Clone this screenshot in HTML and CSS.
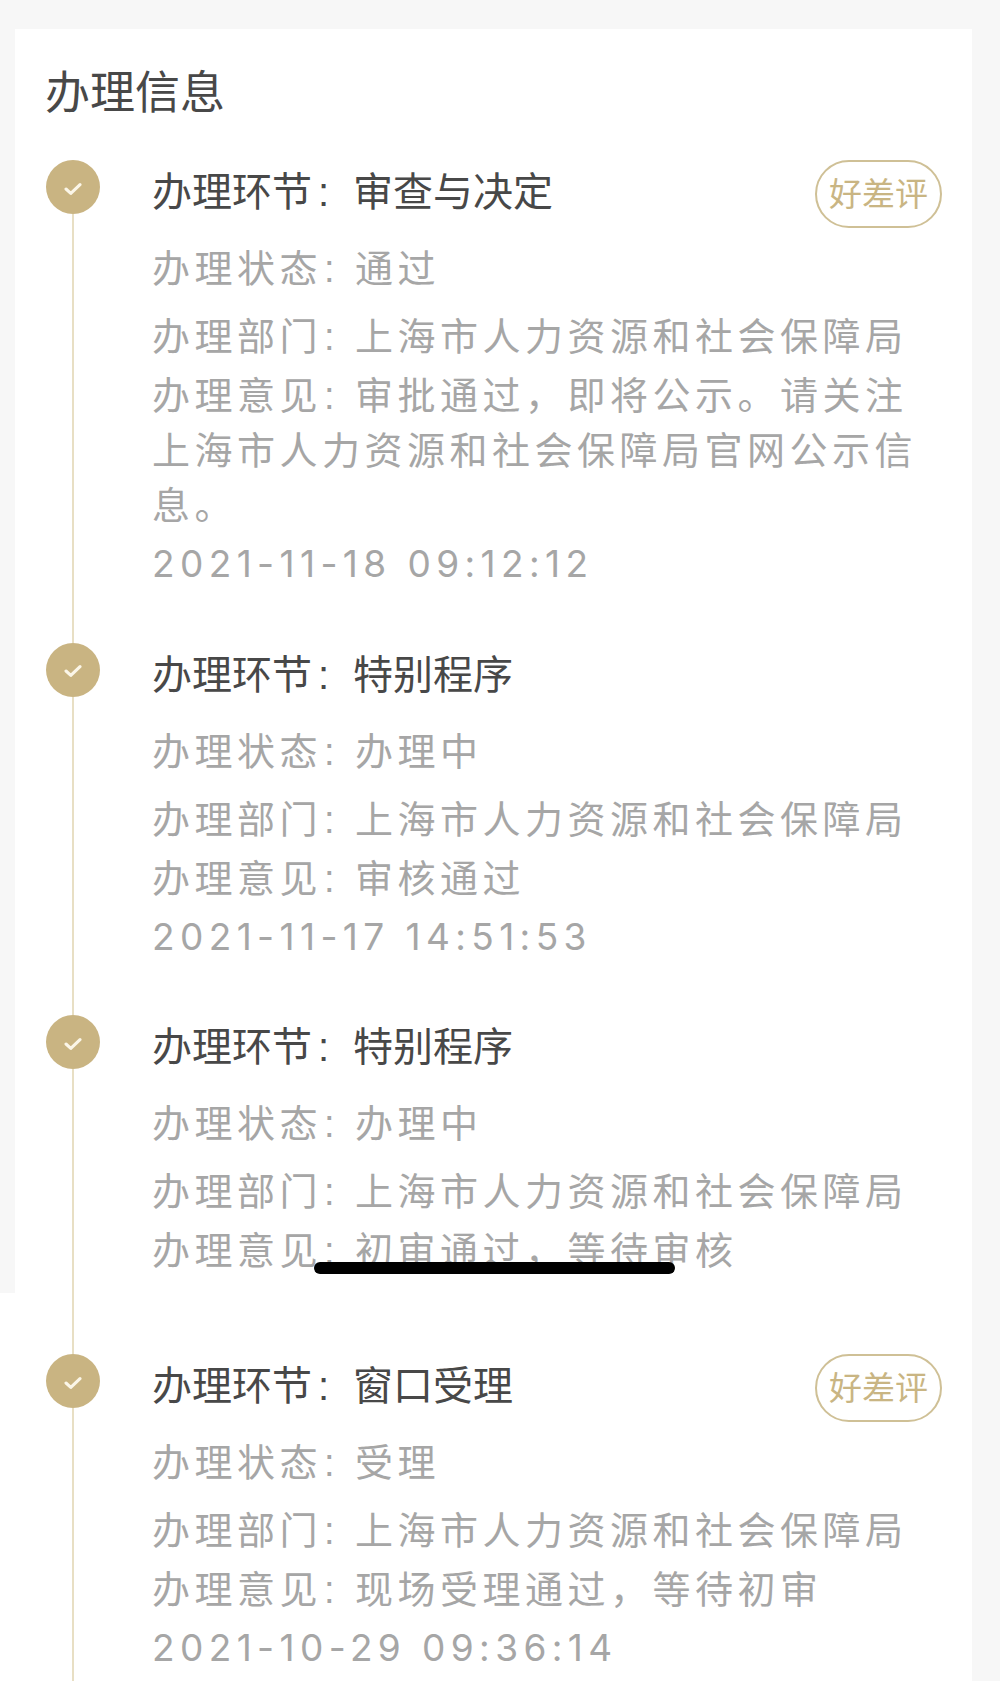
FILE: index.html
```html
<!DOCTYPE html>
<html lang="zh-CN">
  <head>
    <meta charset="utf-8"/>
    <title>办理信息</title>
    <link rel="stylesheet" href="styles.css">
  </head>
  <body>
    <div class="top">
      <div class="card">
        <h1>办理信息</h1>

        <div class="item">
          <div class="marker">
            <span class="dot"><svg viewBox="0 0 20 16" width="18" height="14"><path d="M2 8l5.5 5L18 3"/></svg></span>
            <span class="line"></span>
          </div>
          <div class="info">
            <div class="head">
              <span class="step">办理环节<i class="colon">:</i>审查与决定</span>
              <a class="rate">好差评</a>
            </div>
            <p class="state">办理状态<i class="colon">:</i>通过</p>
            <p class="dept">办理部门<i class="colon">:</i>上海市人力资源和社会保障局</p>
            <p class="note">办理意见<i class="colon">:</i>审批通过&#65292;即将公示。请关注上海市人力资源和社会保障局官网公示信息。</p>
            <p class="time">2021-11-18 09:12:12</p>
          </div>
        </div>

        <div class="item">
          <div class="marker">
            <span class="dot"><svg viewBox="0 0 20 16" width="18" height="14"><path d="M2 8l5.5 5L18 3"/></svg></span>
            <span class="line"></span>
          </div>
          <div class="info">
            <div class="head">
              <span class="step">办理环节<i class="colon">:</i>特别程序</span>
            </div>
            <p class="state">办理状态<i class="colon">:</i>办理中</p>
            <p class="dept">办理部门<i class="colon">:</i>上海市人力资源和社会保障局</p>
            <p class="note">办理意见<i class="colon">:</i>审核通过</p>
            <p class="time">2021-11-17 14:51:53</p>
          </div>
        </div>

        <div class="item item-cut">
          <div class="marker">
            <span class="dot"><svg viewBox="0 0 20 16" width="18" height="14"><path d="M2 8l5.5 5L18 3"/></svg></span>
            <span class="line"></span>
          </div>
          <div class="info">
            <div class="head">
              <span class="step">办理环节<i class="colon">:</i>特别程序</span>
            </div>
            <p class="state">办理状态<i class="colon">:</i>办理中</p>
            <p class="dept">办理部门<i class="colon">:</i>上海市人力资源和社会保障局</p>
            <p class="note">办理意见<i class="colon">:</i>初审通过&#65292;等待审核</p>
          </div>
        </div>
      </div>
      <div class="home-bar"></div>
    </div>

    <div class="bottom">
      <div class="card">
        <div class="lead"></div>
        <div class="item">
          <div class="marker">
            <span class="dot"><svg viewBox="0 0 20 16" width="18" height="14"><path d="M2 8l5.5 5L18 3"/></svg></span>
            <span class="line"></span>
          </div>
          <div class="info">
            <div class="head">
              <span class="step">办理环节<i class="colon">:</i>窗口受理</span>
              <a class="rate">好差评</a>
            </div>
            <p class="state">办理状态<i class="colon">:</i>受理</p>
            <p class="dept">办理部门<i class="colon">:</i>上海市人力资源和社会保障局</p>
            <p class="note">办理意见<i class="colon">:</i>现场受理通过&#65292;等待初审</p>
            <p class="time">2021-10-29 09:36:14</p>
          </div>
        </div>
      </div>
    </div>
  </body>
</html>
```

FILE: styles.css
```css
html, body {
  margin: 0;
  padding: 0;
}
body {
  background: #ffffff;
  font-family: "Noto Sans CJK SC", "Liberation Sans", sans-serif;
  height: 1681px;
  overflow: hidden;
}
p {
  margin: 0;
}
.top {
  position: relative;
  background: #f7f7f7;
  padding: 29px 28px 0 15px;
}
.bottom {
  background: #f7f7f7;
  padding-right: 28px;
}
.bottom .card {
  padding-left: 46px;
}
.card {
  background: #ffffff;
  padding: 0 30px 0 31px;
}
h1 {
  margin: 0 0 0 -1px;
  padding: 31px 0 40px;
  font-size: 45px;
  line-height: 60px;
  font-weight: 400;
  color: #484848;
}
.item {
  display: flex;
}
.marker {
  display: flex;
  flex-direction: column;
  align-items: center;
  flex: none;
  width: 54px;
  margin-right: 52px;
}
.dot {
  display: flex;
  align-items: center;
  justify-content: center;
  flex: none;
  width: 54px;
  height: 54px;
  border-radius: 50%;
  background: #c9b482;
}
.dot svg {
  margin-top: 3px;
  fill: none;
  stroke: #fbf6e8;
  stroke-width: 3.5;
  stroke-linecap: round;
  stroke-linejoin: round;
}
.line {
  flex: 1;
  width: 2px;
  background: #e8dfc4;
}
.lead {
  width: 2px;
  height: 61px;
  margin-left: 26px;
  background: #e8dfc4;
}
.info {
  flex: 1;
  min-width: 0;
  padding-bottom: 51.5px;
  color: #a6a6a6;
  font-size: 38px;
  line-height: 55px;
  letter-spacing: 4.5px;
}
.item-cut .info {
  padding-bottom: 18px;
}
.head {
  display: flex;
  justify-content: space-between;
  height: 60px;
  margin: -1px 0 19px;
}
.step {
  font-size: 40px;
  line-height: 60px;
  letter-spacing: 0;
  color: #484848;
}
.step .colon {
  width: 41px;
  text-indent: 6px;
}
.rate {
  flex: none;
  box-sizing: border-box;
  width: 127px;
  height: 68px;
  margin-top: 1px;
  border: 2px solid #cfc096;
  border-radius: 34px;
  color: #c9b583;
  font-size: 33px;
  line-height: 60px;
  letter-spacing: 0;
  text-align: center;
}
.colon {
  display: inline-block;
  width: 33px;
  font-style: normal;
  font-family: "Liberation Sans", sans-serif;
  line-height: 1;
  text-indent: 2px;
}
.dept {
  margin-top: 13px;
}
.note {
  margin-top: 4px;
}
.time {
  margin-top: 6px;
  font-family: Inter, "Liberation Sans", sans-serif;
  font-size: 37px;
  letter-spacing: 5.4px;
}
.home-bar {
  position: absolute;
  left: 314px;
  top: 1262px;
  width: 361px;
  height: 12px;
  border-radius: 6px;
  background: #000000;
}
```
